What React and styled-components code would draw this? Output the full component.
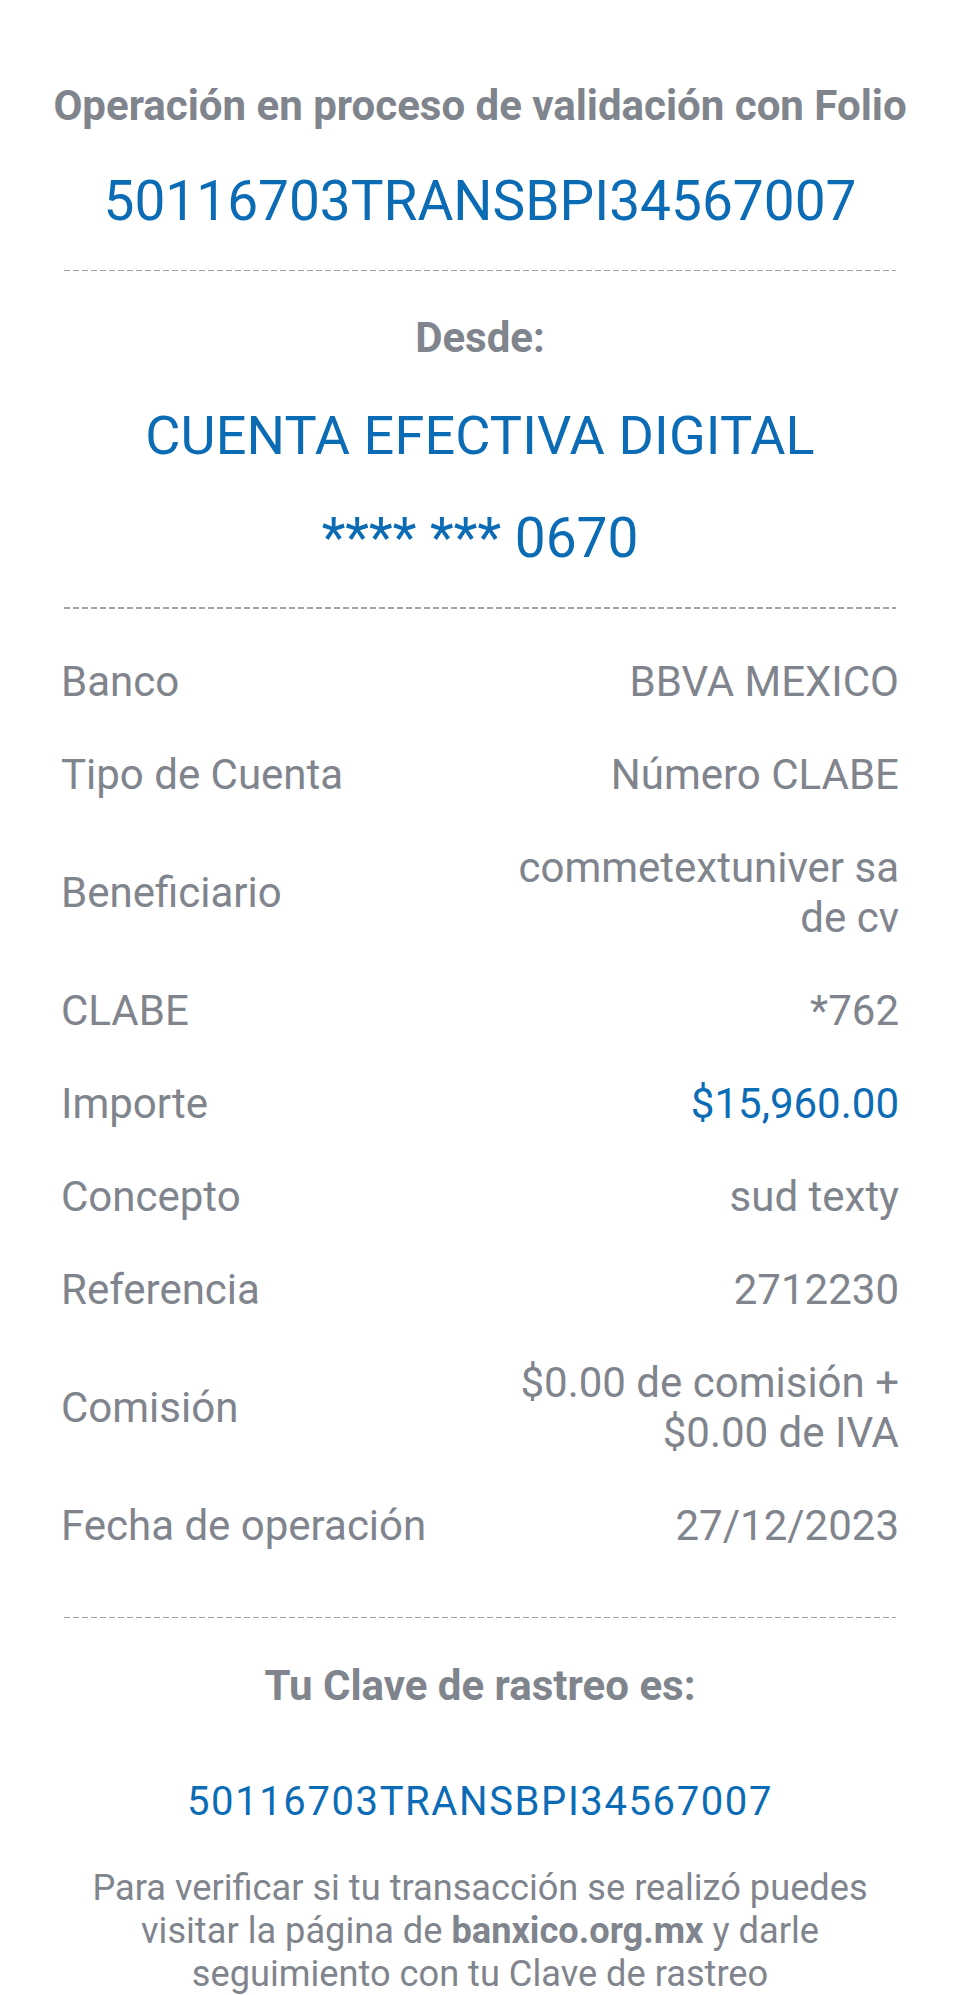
import React from "react";
import styled, { createGlobalStyle } from "styled-components";

const GRAY = "#7f848d";
const BLUE = "#0b6cb5";

const Global = createGlobalStyle`
  html, body { margin: 0; padding: 0; background: #ffffff; }
  body { font-family: Roboto, "Noto Sans", "Liberation Sans", sans-serif; -webkit-font-smoothing: antialiased; }
  * { box-sizing: border-box; }
`;

const Page = styled.main`
  width: 960px;
  height: 1995px;
  overflow: hidden;
  padding: 81px 61px 0;
  background: #fff;
  display: flex;
  flex-direction: column;
`;

const Heading = styled.h2`
  margin: ${(p) => p.$mt || 0}px -30px 0;
  font-size: 42px;
  line-height: 50px;
  font-weight: 700;
  color: ${GRAY};
  text-align: center;
  white-space: nowrap;
`;

const BlueLine = styled.div`
  margin: ${(p) => p.$mt || 0}px -30px 0;
  font-size: ${(p) => p.$size}px;
  line-height: ${(p) => p.$lh}px;
  letter-spacing: ${(p) => p.$ls || 0}px;
  font-weight: 400;
  color: ${BLUE};
  text-align: center;
  white-space: nowrap;
`;

const Divider = styled.hr`
  border: 0;
  height: 2px;
  margin: ${(p) => p.$mt}px 3px 0;
  background: repeating-linear-gradient(
    to right,
    #a2a4a8 0 6px,
    transparent 6px 9px
  );
`;

const Details = styled.dl`
  margin: 27px 0 0;
  padding: 0;
  display: flex;
  flex-direction: column;
`;

const Row = styled.div`
  display: grid;
  grid-template-columns: 1fr 410px;
  align-items: center;
  padding: 21.5px 0;
  font-size: 42px;
  line-height: 50px;
`;

const Label = styled.dt`
  margin: 0;
  color: ${GRAY};
  font-weight: 400;
`;

const Value = styled.dd`
  margin: 0;
  text-align: right;
  color: ${(p) => (p.$accent ? BLUE : GRAY)};
  font-weight: 400;
`;

const Note = styled.p`
  margin: 40px auto 0;
  width: 820px;
  font-size: 36.2px;
  line-height: 43px;
  color: ${GRAY};
  text-align: center;
  strong { font-weight: 700; }
`;

const rows = [
  ["Banco", "BBVA MEXICO"],
  ["Tipo de Cuenta", "Número CLABE"],
  ["Beneficiario", "commetextuniver sa de cv"],
  ["CLABE", "*762"],
  ["Importe", "$15,960.00", true],
  ["Concepto", "sud texty"],
  ["Referencia", "2712230"],
  ["Comisión", "$0.00 de comisión + $0.00 de IVA"],
  ["Fecha de operación", "27/12/2023"],
];

export default function App() {
  return (
    <>
      <Global />
      <Page>
        <Heading>Operación en proceso de validación con Folio</Heading>
        <BlueLine $mt={38} $size={55} $lh={64} $ls={0}>
          50116703TRANSBPI34567007
        </BlueLine>
        <Divider $mt={37} />
        <Heading $mt={42}>Desde:</Heading>
        <BlueLine $mt={42} $size={54} $lh={62} $ls={0.15}>
          CUENTA EFECTIVA DIGITAL
        </BlueLine>
        <BlueLine $mt={39} $size={55} $lh={64}>
          **** *** 0670
        </BlueLine>
        <Divider $mt={37} />
        <Details>
          {rows.map(([label, value, accent]) => (
            <Row key={label}>
              <Label>{label}</Label>
              <Value $accent={accent}>{value}</Value>
            </Row>
          ))}
        </Details>
        <Divider $mt={44} />
        <Heading $mt={43}>Tu Clave de rastreo es:</Heading>
        <BlueLine $mt={67} $size={40} $lh={48} $ls={1.6}>
          50116703TRANSBPI34567007
        </BlueLine>
        <Note>
          Para verificar si tu transacción se realizó puedes visitar la página de{" "}
          <strong>banxico.org.mx</strong> y darle seguimiento con tu Clave de rastreo
        </Note>
      </Page>
    </>
  );
}
